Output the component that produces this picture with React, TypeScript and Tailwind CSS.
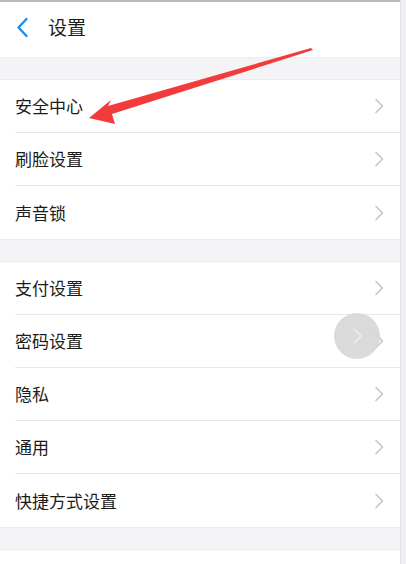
import React from 'react';

const Chevron = () => (
  <svg width="10" height="16" viewBox="0 0 10 16" fill="none" className="shrink-0">
    <path d="M2 1.5 L8.5 8 L2 14.5" stroke="#c4c4c8" strokeWidth="1.5" strokeLinecap="round" strokeLinejoin="round" />
  </svg>
);

const Row = ({ label, last }: { label: string; last?: boolean }) => (
  <div className="h-[53px] pl-[15px] flex items-stretch">
    <div className={`flex-1 flex items-center justify-between pr-[16px] ${last ? '' : 'border-b border-[#e8e8ea]'}`}>
      <span className="text-[17px] text-[#1c1c1c]">{label}</span>
      <Chevron />
    </div>
  </div>
);

const Gap = () => <div className="h-[23px] bg-[#f4f4f7] border-y border-[#ececee]" />;

const App: React.FC = () => {
  const group1 = ['安全中心', '刷脸设置', '声音锁'];
  const group2 = ['支付设置', '密码设置', '隐私', '通用', '快捷方式设置'];

  return (
    <div
      className="relative w-[406px] h-[564px] overflow-hidden bg-white flex"
      style={{ fontFamily: '"Noto Sans CJK SC", "Noto Sans", sans-serif' }}
    >
      <div className="w-[400px] flex flex-col border-t-2 border-[#b8b8b8]">
        {/* Header */}
        <div className="h-[55px] flex items-center px-[16px] pb-[4px] gap-[19px]">
          <svg width="13" height="21" viewBox="0 0 13 21" fill="none">
            <path d="M10.5 2 L2.5 10.5 L10.5 19" stroke="#1a8cf0" strokeWidth="2.4" strokeLinecap="round" strokeLinejoin="round" />
          </svg>
          <span className="text-[19px] text-[#1c1c1c]">设置</span>
        </div>
        <Gap />
        <div>
          {group1.map((l, i) => (
            <Row key={l} label={l} last={i === group1.length - 1} />
          ))}
        </div>
        <Gap />
        <div>
          {group2.map((l, i) => (
            <Row key={l} label={l} last={i === group2.length - 1} />
          ))}
        </div>
        <Gap />
        <div className="flex-1 bg-white" />
      </div>
      <div className="w-[6px] bg-[#efeff1] border-l border-[#e2e2e4]" />

      {/* Annotation arrow */}
      <svg className="absolute left-0 top-0 pointer-events-none" width="406" height="564" viewBox="0 0 406 564">
        <polygon points="311,48 108,106 111,100 89,118 115,124 112,114 313,50" fill="#f23b3b" />
      </svg>

      {/* Floating assistive button */}
      <div className="absolute left-[334px] top-[313px] w-[46px] h-[46px] rounded-full bg-[#d6d6d6]/90 flex items-center justify-center">
        <svg width="12" height="18" viewBox="0 0 12 18" fill="none">
          <path d="M3 2 L10 9 L3 16" stroke="#eeeeee" strokeWidth="1.6" strokeLinecap="round" strokeLinejoin="round" />
        </svg>
      </div>
    </div>
  );
};

export default App;
